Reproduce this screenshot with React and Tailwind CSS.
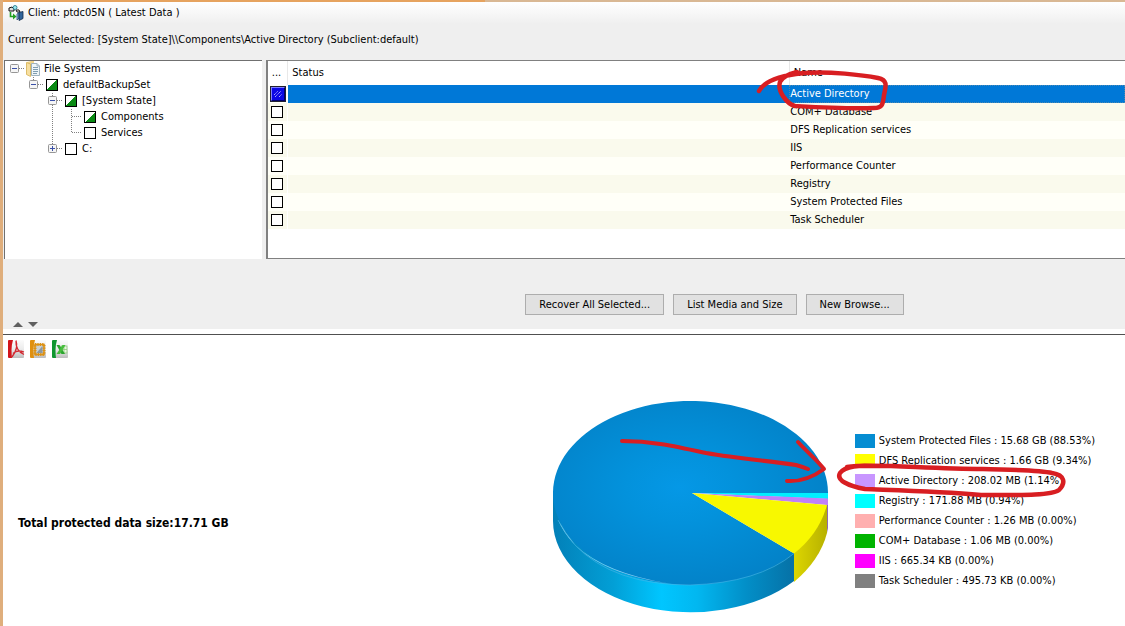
import React from "react";

const components = [
  "Active Directory",
  "COM+ Database",
  "DFS Replication services",
  "IIS",
  "Performance Counter",
  "Registry",
  "System Protected Files",
  "Task Scheduler",
];

const legend = [
  { color: "bg-[#058dd2]", text: "System Protected Files : 15.68 GB (88.53%)" },
  { color: "bg-[#ffff00]", text: "DFS Replication services : 1.66 GB (9.34%)" },
  { color: "bg-[#c896ff]", text: "Active Directory : 208.02 MB (1.14%)" },
  { color: "bg-[#00ffff]", text: "Registry : 171.88 MB (0.94%)" },
  { color: "bg-[#ffafaf]", text: "Performance Counter : 1.26 MB (0.00%)" },
  { color: "bg-[#00b400]", text: "COM+ Database : 1.06 MB (0.00%)" },
  { color: "bg-[#ff00ff]", text: "IIS : 665.34 KB (0.00%)" },
  { color: "bg-[#808080]", text: "Task Scheduler : 495.73 KB (0.00%)" },
];

// Connector cell: `line` is the vertical part, `dash` the horizontal one, `box` the expander sign.
function Branch({ line, dash, box, name }) {
  const art = (
    <svg width="19" height="16" viewBox="0 0 19 16" aria-hidden="true" className="block">
      {line && (
        <path
          d={line === "full" ? "M8.5 0V16" : line === "up" ? "M8.5 0V8" : "M8.5 8V16"}
          stroke="#808080"
          strokeDasharray="1 1"
        />
      )}
      {dash && <path d="M9 7.5H18" stroke="#808080" strokeDasharray="1 1" />}
      {box && (
        <>
          <rect x="4.5" y="3.5" width="8" height="8" rx="1" fill="#f5f5f5" stroke="#969696" />
          <path d={box === "plus" ? "M6 7.5H11M8.5 5V10" : "M6 7.5H11"} stroke="#3a50a8" />
        </>
      )}
    </svg>
  );
  return box ? (
    <button type="button" aria-label={name} className="shrink-0">
      {art}
    </button>
  ) : (
    <span className="shrink-0">{art}</span>
  );
}

function Gap() {
  return <span className="w-[19px] shrink-0" />;
}

function TreeCheck({ label, partial }) {
  return (
    <label className="ml-0.5 flex items-center gap-[5px]">
      <input
        type="checkbox"
        className={
          partial
            ? "size-3 appearance-none border border-black bg-[linear-gradient(135deg,white_50%,#0a8a14_50%)]"
            : "size-3 appearance-none border border-black bg-white"
        }
      />
      <span className="whitespace-nowrap">{label}</span>
    </label>
  );
}

function FolderIcon() {
  return (
    <svg width="15" height="16" viewBox="0 0 15 16" className="ml-px shrink-0" aria-hidden="true">
      <path d="M1 1L5 0H8V14H1Z" fill="#f1d48a" />
      <path d="M0.500 1.500L4.500 3V15.500L0.500 13.500Z" fill="#f7dfa0" stroke="#d6b050" strokeWidth="0.800" />
      <path d="M5.500 2.500H11L13.500 5V14.500H5.500Z" fill="#eef5f8" stroke="#9fb2bd" />
      <path d="M7 6.500H12M7 8.500H12M7 10.500H12M7 12.500H11" stroke="#7f9db0" />
      <path d="M11 2.500V5H13.500" fill="none" stroke="#9fb2bd" />
    </svg>
  );
}

function Tree() {
  return (
    <ul className="pl-px">
      <li className="flex h-4 items-center">
        <Branch dash box="minus" name="Collapse File System" />
        <FolderIcon />
        <span className="ml-[3px] whitespace-nowrap">File System</span>
      </li>
      <li className="flex h-4 items-center">
        <Gap />
        <Branch line="up" dash box="minus" name="Collapse defaultBackupSet" />
        <TreeCheck label="defaultBackupSet" partial />
      </li>
      <li className="flex h-4 items-center">
        <Gap />
        <Gap />
        <Branch line="full" dash box="minus" name="Collapse System State" />
        <TreeCheck label="[System State]" partial />
      </li>
      <li className="flex h-4 items-center">
        <Gap />
        <Gap />
        <Branch line="full" />
        <Branch line="full" dash />
        <TreeCheck label="Components" partial />
      </li>
      <li className="flex h-4 items-center">
        <Gap />
        <Gap />
        <Branch line="full" />
        <Branch line="up" dash />
        <TreeCheck label="Services" />
      </li>
      <li className="flex h-4 items-center">
        <Gap />
        <Gap />
        <Branch line="up" dash box="plus" name="Expand C:" />
        <TreeCheck label="C:" />
      </li>
    </ul>
  );
}

function ClientIcon() {
  return (
    <svg width="16" height="16" viewBox="0 0 16 16" aria-hidden="true">
      <path d="M1 3L4 2L6 4V6H1Z" fill="#ddd" stroke="#111" />
      <path d="M8 5H11L12 7H9Z" fill="#fff" stroke="#111" />
      <circle cx="7" cy="2.500" r="2" fill="#9be8f0" stroke="#187088" strokeWidth="0.800" />
      <path d="M2.500 7V11.500H6" fill="none" stroke="#22a022" strokeWidth="1.600" />
      <path d="M5 8.500L8.500 11.500L5 14.500Z" fill="#22a022" />
      <path d="M9 9L11 7.500V13L9 15Z" fill="#8fb4de" stroke="#28507c" strokeWidth="0.800" />
      <path d="M11 7.500L15 6.500V13.500L11 15.500Z" fill="#31659c" stroke="#122c4c" strokeWidth="0.800" />
    </svg>
  );
}

function ReportIcon({ kind }) {
  const spine = kind === "pdf" ? "#d2141a" : kind === "html" ? "#e0900f" : "#0f962f";
  return (
    <svg width="17" height="18" viewBox="0 0 17 18" aria-hidden="true">
      <defs>
        <linearGradient id={"page-" + kind} x1="0" y1="0" x2="0" y2="1">
          <stop offset="0" stopColor="#fbfbfb" />
          <stop offset="0.500" stopColor="#ececec" />
          <stop offset="1" stopColor="#bdbdbd" />
        </linearGradient>
      </defs>
      <rect x="3" y="0" width="13" height="18" rx="1" fill={"url(#page-" + kind + ")"} />
      <path d="M1 0H5Q3.500 5 3.500 10T4 18H1Q0 18 0 17V1Q0 0 1 0Z" fill={spine} />
      {kind === "pdf" && (
        <path
          d="M8 0.500C9.500 5 8.500 11 4 17M8 1C7.500 7 11 12 16 14.500M5 13.500C8 10.500 12 10.500 16 12"
          fill="none"
          stroke="#d42a32"
          strokeWidth="1.300"
        />
      )}
      {kind === "html" && (
        <>
          <rect x="5" y="4.500" width="9" height="10" fill="#c9d0d4" stroke="#dc9114" strokeWidth="1.600" />
          <rect x="5" y="4.500" width="9" height="10" fill="none" stroke="#dc9114" strokeWidth="3" strokeDasharray="1.200 1.200" />
          <path d="M6.500 13L12.500 6V13Z" fill="#8e989e" />
        </>
      )}
      {kind === "xls" && (
        <>
          <rect x="9" y="6" width="6" height="7" fill="#e8f6e0" stroke="#8cc87a" strokeWidth="0.800" />
          <path d="M9 9.500H15M12 6V13" stroke="#8cc87a" strokeWidth="0.800" />
          <path d="M4.500 5H7.500L13 14H9.500Z" fill="#2aa52e" />
          <path d="M10.500 5H13.500L8 14H4.500Z" fill="#45bd3c" />
        </>
      )}
    </svg>
  );
}

function Pie() {
  return (
    <svg width="275" height="212" viewBox="0 0 275 212" role="img" aria-label="Protected data by component" className="block shrink-0">
      <defs>
        <radialGradient id="top" cx="0.460" cy="0.470" r="0.550">
          <stop offset="0" stopColor="#0598e6" />
          <stop offset="0.350" stopColor="#0392dc" />
          <stop offset="1" stopColor="#0382c8" />
        </radialGradient>
        <linearGradient id="rim" gradientUnits="userSpaceOnUse" x1="0" y1="0" x2="241" y2="0">
          <stop offset="0" stopColor="#0380b8" />
          <stop offset="0.250" stopColor="#029fd6" />
          <stop offset="0.450" stopColor="#00c6ff" />
          <stop offset="0.600" stopColor="#02b7f0" />
          <stop offset="0.800" stopColor="#028fc8" />
          <stop offset="1" stopColor="#0671a6" />
        </linearGradient>
        <linearGradient id="yellowRim" x1="0" x2="1">
          <stop offset="0" stopColor="#ddd600" />
          <stop offset="1" stopColor="#b7b100" />
        </linearGradient>
      </defs>
      <path d="M0 92V120A137.500 91.500 0 0 0 241 180V152Z" fill="url(#rim)" />
      <path d="M241 152V181Q267 159 274 132V103Z" fill="url(#yellowRim)" />
      <path d="M274 104V132L275 127V98Z" fill="#8d69b5" />
      <path d="M275 92A137.500 92 0 1 0 241 152.500L139 92Z" fill="url(#top)" />
      <path d="M139 92H275V98Z" fill="#00efff" />
      <path d="M139 92L275 97.500V104L274 104Z" fill="#c080f8" />
      <path d="M139 92L274 104Q266 133 241 152.500Z" fill="#f8f800" />
      <path d="M5 119Q27 170 116 182.500Q52 172 22 144Q12 132 5 119Z" fill="#7fcdf2" />
      <path d="M5 119Q12 132 22 144Q60 184 137 184Q205 182 241 152.500" fill="none" stroke="#48b5e8" strokeWidth="0.600" />
    </svg>
  );
}

function NameHighlight() {
  return (
    <svg
      width="132"
      height="46"
      viewBox="754 67 132 46"
      aria-hidden="true"
      className="pointer-events-none absolute -left-[34px] top-[6px] z-10"
    >
      <path
        d="M757 91C763 80 781 75 802 73C827 71 861 75 876 78C886 80 884 86 882 95C881 103 881 108 872 108C845 109 811 107 793 106C785 104 775 91 778 82C780 77 787 74 795 72"
        fill="none"
        stroke="#d81e22"
        strokeWidth="4.500"
        strokeLinecap="round"
        strokeLinejoin="round"
      />
    </svg>
  );
}

function ChartNotes() {
  return (
    <svg
      width="512"
      height="212"
      viewBox="553 401 512 212"
      overflow="visible"
      aria-hidden="true"
      className="pointer-events-none absolute left-0 top-0"
    >
      <g fill="none" stroke="#d81e22" strokeWidth="4" strokeLinecap="round" strokeLinejoin="round">
        <path d="M622 441C652 441 674 446 706 453C740 459 771 461 796 465Q803 467 808 469" />
        <path d="M798 442C808 453 817 460 824 469C813 477 801 482 787 481" />
        <path
          d="M847 467C873 463 925 469 983 469C1015 470 1040 470 1052 473C1065 475 1066 483 1059 490C1051 496 1015 495 981 495C938 491 889 490 865 489C848 486 836 480 840 473C845 466 861 465 872 466"
          strokeWidth="4.500"
        />
      </g>
    </svg>
  );
}

const toolButton =
  "h-[21px] border border-[#adadad] bg-[#e1e1e1] px-[13px] whitespace-nowrap hover:border-[#0078d7]";

export default function App() {
  return (
    <main className="flex min-h-screen flex-col overflow-hidden border-l-3 border-[#dfae7c] bg-white font-['DejaVu_Sans_Condensed','DejaVu_Sans',sans-serif] text-[11px] leading-4 text-black">
      <section className="flex flex-col bg-[#efefef]">
        <div className="flex h-0.5 bg-[#d9b894]">
          <span className="w-[43%] bg-[#e6a35f]" />
        </div>
        <header className="flex h-[22px] items-center gap-1 bg-linear-to-b from-white to-[#efefef] px-[5px]">
          <ClientIcon />
          <h1>Client: ptdc05N ( Latest Data )</h1>
        </header>
        <p className="px-[5px] pt-2 pb-3">
          Current Selected: [System State]\\Components\Active Directory (Subclient:default)
        </p>

        <div className="flex min-h-[199px] gap-1 pl-px">
          <nav aria-label="Backup contents" className="w-[23%] shrink-0 border-t border-l border-[#707070] bg-white">
            <Tree />
          </nav>
          <div className="min-w-0 flex-1 border-y border-l-2 border-[#808080] bg-white">
            <table className="w-full table-fixed border-collapse text-left">
              <thead>
                <tr className="h-6">
                  <th className="w-5 border-r border-[#e8e8e8] pl-1 font-normal">...</th>
                  <th className="w-[58.500%] border-r border-[#e8e8e8] pl-1 font-normal">Status</th>
                  <th className="relative pl-1 font-normal">
                    Name
                    <NameHighlight />
                  </th>
                </tr>
              </thead>
              <tbody>
                {components.map((name, i) => (
                  <tr key={name} className={i % 2 ? "h-[18px] bg-[#fafaed]" : "h-[18px] bg-[#fffff8]"}>
                    <td className="p-0 pl-[3px]">
                      {i === 0 ? (
                        <span className="relative block size-3.5">
                          <input
                            type="checkbox"
                            aria-label={name}
                            defaultChecked
                            className="block size-3.5 appearance-none border border-[#00006c] border-t-[#8080ff] border-l-[#8080ff] bg-[#0c08e4] outline-1 outline-[#202030]"
                          />
                          <svg width="14" height="14" viewBox="0 0 14 14" aria-hidden="true" className="pointer-events-none absolute left-0 top-0">
                            <path d="M3 8L7 4M4 10L10 4M8 10L11 7" stroke="#a8a8ff" strokeDasharray="1.400 0.500" />
                          </svg>
                        </span>
                      ) : (
                        <input
                          type="checkbox"
                          aria-label={name}
                          className="block size-3 appearance-none border border-black bg-white"
                        />
                      )}
                    </td>
                    <td className={i === 0 ? "border-l border-white bg-[#0078d7] p-0" : "border-l border-white p-0"} />
                    <td
                      className={
                        i === 0
                          ? "bg-[#0078d7] p-0 pl-px text-white outline-1 -outline-offset-1 outline-dotted outline-[#4d88b0]"
                          : "p-0 pl-px"
                      }
                    >
                      {name}
                    </td>
                  </tr>
                ))}
              </tbody>
            </table>
          </div>
        </div>

        <div className="flex justify-center gap-[9px] pt-[35px] pl-[301px]">
          <button type="button" className={toolButton}>Recover All Selected...</button>
          <button type="button" className={toolButton}>List Media and Size</button>
          <button type="button" className={toolButton}>New Browse...</button>
        </div>
        <div className="flex gap-[5px] px-[10px] pt-[7px] pb-[2px]">
          <button type="button" aria-label="Collapse report">
            <svg width="10" height="5" viewBox="0 0 10 5" aria-hidden="true"><path d="M0 5L5 0L10 5Z" fill="#606060" /></svg>
          </button>
          <button type="button" aria-label="Expand report">
            <svg width="10" height="5" viewBox="0 0 10 5" aria-hidden="true"><path d="M0 0L5 5L10 0Z" fill="#606060" /></svg>
          </button>
        </div>
      </section>

      <section className="mt-[5px] flex flex-1 flex-col border-t border-[#505050]">
        <div className="flex gap-[5px] px-[5px] pt-[5px]">
          <button type="button" aria-label="Save as PDF"><ReportIcon kind="pdf" /></button>
          <button type="button" aria-label="Save as HTML"><ReportIcon kind="html" /></button>
          <button type="button" aria-label="Save as Excel"><ReportIcon kind="xls" /></button>
        </div>
        <div className="flex pt-[43px]">
          <div className="flex w-[49%] shrink-0 items-center pt-8 pl-[15px]">
            <strong className="text-[12px]">Total protected data size:17.71 GB</strong>
          </div>
          <div className="relative flex items-start gap-[27px]">
            <Pie />
            <ul className="pt-[30px]">
              {legend.map((item) => (
                <li key={item.text} className="flex h-5 items-center gap-1 whitespace-nowrap">
                  <span className={item.color + " h-3.5 w-5"} />
                  {item.text}
                </li>
              ))}
            </ul>
            <ChartNotes />
          </div>
        </div>
      </section>
    </main>
  );
}
